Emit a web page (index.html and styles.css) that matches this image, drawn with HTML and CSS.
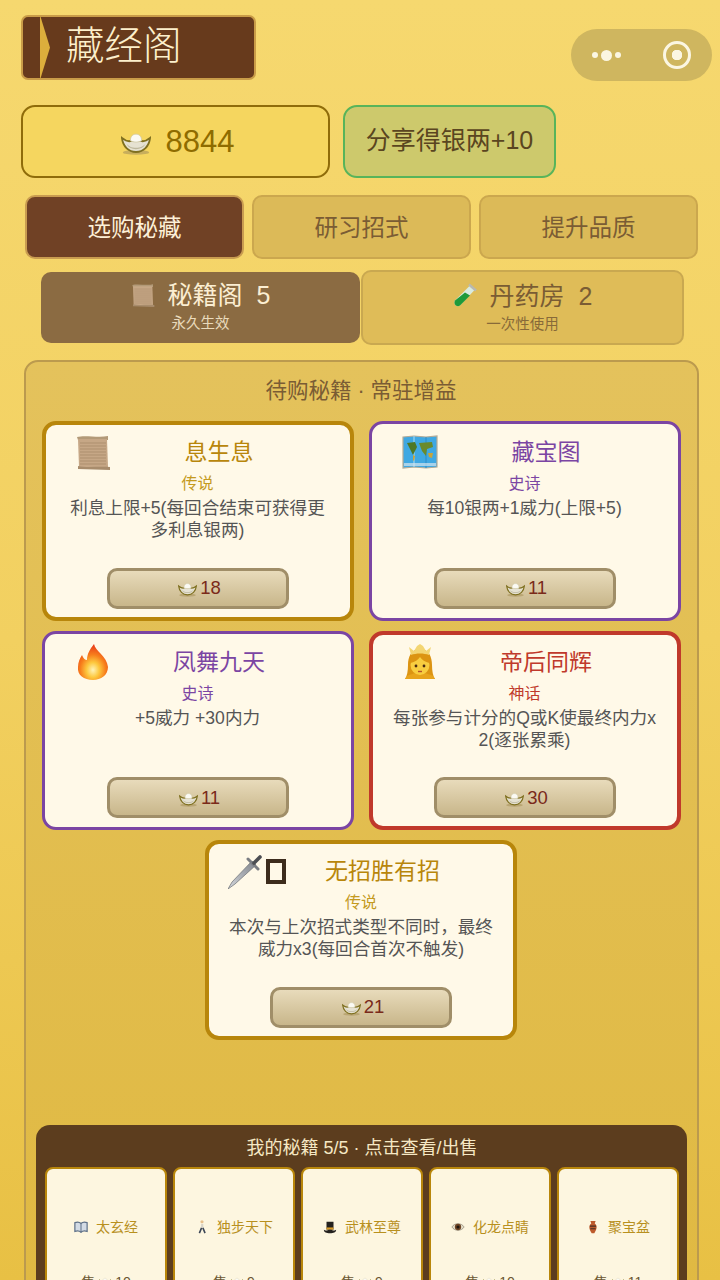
FILE: index.html
```html
<!DOCTYPE html>
<html lang="zh-CN">
<head>
  <meta charset="UTF-8">
  <meta name="viewport" content="width=device-width, initial-scale=1.0">
  <title>藏经阁</title>
  <link rel="stylesheet" href="styles.css">
</head>
<body>

<svg class="defs" width="0" height="0">
  <defs>
    <linearGradient id="blade" x1="0" y1="1" x2="1" y2="0">
      <stop offset="0" stop-color="#d5d8dc"/>
      <stop offset="1" stop-color="#7f848b"/>
    </linearGradient>
    <radialGradient id="flame" cx="0.5" cy="0.72" r="0.7">
      <stop offset="0" stop-color="#fff3b8"/>
      <stop offset="0.3" stop-color="#fdc83e"/>
      <stop offset="0.6" stop-color="#f77f1c"/>
      <stop offset="1" stop-color="#e8391a"/>
    </radialGradient>
  </defs>
  <symbol id="ingot" viewBox="0 0 32 24">
    <ellipse cx="16" cy="21.5" rx="14" ry="2.5" fill="#a8925a" opacity="0.6"/>
    <path d="M1 6 C6 10 9 10 11 9 L21 9 C23 10 26 10 31 6 C30 15 24 21 16 21 C8 21 2 15 1 6 Z" fill="#e6e2d2" stroke="#7f7020" stroke-width="2"/>
    <path d="M10 9 C10 4 13 2 16 2 C19 2 22 4 22 9 C19 11 13 11 10 9 Z" fill="#fbfaf4" stroke="#cfc8a6" stroke-width="0.8"/>
    <path d="M6 12 C9 18 23 18 26 12 C24 20 8 20 6 12 Z" fill="#bdb89e"/>
  </symbol>
  <symbol id="scroll" viewBox="0 0 36 36">
    <path d="M2 3 C10 1 24 4 33 2 L33 6 L3 6 Z" fill="#b39a78"/>
    <path d="M3 5 H32 L33 33 H4 Z" fill="#c6a786"/>
    <path d="M5 9H31M5 12H31M5 15H31M5 18H31M5 21H31M5 24H31M5 27H31M5 30H31" stroke="#ad8f6e" stroke-width="1"/>
    <path d="M3 32 C12 34 24 32 35 33 L35 36 L3 35 Z" fill="#a88c6c"/>
  </symbol>
  <symbol id="tube" viewBox="2 1 24 25">
    <path d="M19 3 L24 7 L9 23 C6 25 2 22 4 18 Z" fill="#d9ebe0"/>
    <path d="M14 10 L19 13 L9 23 C6 25 2 22 4 18 Z" fill="#1f9a3a"/>
    <path d="M18 2 L25 8" stroke="#b9b9b0" stroke-width="2.4"/>
  </symbol>
  <symbol id="map" viewBox="0 0 36 36">
    <path d="M1 3 L12 2 L24 3 L35 2 V33 L24 34 L12 33 L1 34 Z" fill="#3fa8e2" stroke="#b3ab97" stroke-width="1.2"/>
    <path d="M12 2V33" stroke="#8fcdee" stroke-width="1.4"/>
    <path d="M24 3V34" stroke="#2e8cc6" stroke-width="1"/>
    <path d="M5 9 L13 8 L15 13 L11 21 L8 15 Z" fill="#4e7826"/>
    <path d="M17 9 L30 8 L31 13 L25 15 L24 22 L20 17 Z" fill="#6a8a2c"/>
    <path d="M11 21 L13 22 L12 27 L11 26 Z" fill="#c8a43a"/>
    <path d="M26 19 L31 19 L30 24 L27 23 Z" fill="#c8a43a"/>
    <rect x="2" y="29" width="32" height="3" fill="#dfe8ee" opacity="0.65"/>
  </symbol>
  <symbol id="fire" viewBox="0 0 32 36">
    <path d="M17 0 C18 7 30 12 31 23 C31 31 24 36 16 36 C7 36 0 31 1 23 C1 18 3 14 5 11 C6 14 8 16 10 16 C10 10 13 5 17 0 Z" fill="url(#flame)"/>
  </symbol>
  <symbol id="queen" viewBox="0 0 32 36">
    <path d="M16 5 C7 5 4 13 4 21 C4 27 3 32 1 35 H31 C29 32 28 27 28 21 C28 13 25 5 16 5 Z" fill="#dc9412"/>
    <path d="M3 32 C7 30 9 30 11 29 H21 C23 30 25 30 29 32 L31 35 H1 Z" fill="#e8a41c"/>
    <ellipse cx="16" cy="21" rx="9.5" ry="10" fill="#f8cd40"/>
    <path d="M6.5 19 C11 18 14 16 16 13 C18 16 21 18 25.5 19 L25 11 H7 Z" fill="#dc9412"/>
    <path d="M7 11 L5 3 L10 7 L13 2 L16 0 L19 2 L22 7 L27 3 L25 11 C20 9 12 9 7 11 Z" fill="#f3d572"/>
    <circle cx="12" cy="22" r="1.4" fill="#4a2a10"/>
    <circle cx="20" cy="22" r="1.4" fill="#4a2a10"/>
    <path d="M14 27.5 H18" stroke="#b4502a" stroke-width="1.4"/>
  </symbol>
  <symbol id="dagger" viewBox="0 0 36 36">
    <path d="M24 8 L28 12 L7 31 L0 36 L4 29 Z" fill="url(#blade)" stroke="#6a6e74" stroke-width="0.7"/>
    <path d="M20 6 L30 16" stroke="#7a7d82" stroke-width="3" stroke-linecap="round"/>
    <path d="M26 10 L32 4" stroke="#4c4e52" stroke-width="3.6" stroke-linecap="round"/>
  </symbol>
  <symbol id="book" viewBox="0 0 16 14">
    <path d="M1 2 C4 1 6 1 8 3 C10 1 12 1 15 2 V12 C12 11 10 11 8 13 C6 11 4 11 1 12 Z" fill="#d3dbe5" stroke="#5f7189" stroke-width="1.4"/>
    <path d="M8 3V13" stroke="#5f7189" stroke-width="1.2"/>
  </symbol>
  <symbol id="walker" viewBox="0 0 10 16">
    <circle cx="5" cy="2" r="1.8" fill="#e8c08a"/>
    <path d="M4 4.5 L6.5 4.5 L6.5 9 L4 9 Z" fill="#d8d4c8"/>
    <path d="M4.5 9 L2 15 M6 9 L8.5 15" stroke="#3c4656" stroke-width="1.8"/>
  </symbol>
  <symbol id="hat" viewBox="0 0 16 14">
    <path d="M4 1 H12 V10 H4 Z" fill="#23211e"/>
    <rect x="4" y="7.5" width="8" height="2.5" fill="#d99a26"/>
    <path d="M1 10 C3 12 5 10 8 10 C11 10 13 12 15 10 C15 13 12 14 8 14 C4 14 1 13 1 10 Z" fill="#23211e"/>
  </symbol>
  <symbol id="eye" viewBox="0 0 16 12">
    <path d="M1 6 C4 1 12 1 15 6 C12 11 4 11 1 6 Z" fill="#e4ddc8" stroke="#8a8474" stroke-width="0.8"/>
    <circle cx="8" cy="6" r="3.6" fill="#6d4424"/>
    <circle cx="8" cy="6" r="1.8" fill="#1f1610"/>
  </symbol>
  <symbol id="jar" viewBox="0 0 10 16">
    <path d="M2 1 H8 L7 4 C10 6 10 10 6.5 15 H3.5 C0 10 0 6 3 4 Z" fill="#bd5a2c"/>
    <path d="M1.5 7 H8.5 M2 10 H8" stroke="#4a3024" stroke-width="1.4"/>
  </symbol>
</svg>

<div class="page">

  <!-- 顶部标题 + 小程序胶囊 -->
  <div class="top-bar">
    <div class="title-plate">
      <span class="title-notch"></span>
      <span class="title-text">藏经阁</span>
    </div>
    <div class="capsule">
      <div class="capsule-dots"><i></i><i class="big"></i><i></i></div>
      <div class="capsule-ring"></div>
    </div>
  </div>

  <!-- 银两 -->
  <div class="money-row">
    <div class="money-box">
      <svg class="money-icon"><use href="#ingot"/></svg>
      <span>8844</span>
    </div>
    <div class="share-btn">分享得银两+10</div>
  </div>

  <!-- 主标签 -->
  <div class="tabs">
    <div class="tab tab-active">选购秘藏</div>
    <div class="tab">研习招式</div>
    <div class="tab">提升品质</div>
  </div>

  <!-- 子标签 -->
  <div class="subtabs">
    <div class="subtab subtab-active">
      <div class="subtab-title"><svg class="subtab-icon"><use href="#scroll"/></svg>秘籍阁<span class="subtab-num">5</span></div>
      <div class="subtab-note">永久生效</div>
    </div>
    <div class="subtab">
      <div class="subtab-title"><svg class="subtab-icon"><use href="#tube"/></svg>丹药房<span class="subtab-num">2</span></div>
      <div class="subtab-note">一次性使用</div>
    </div>
  </div>

  <div class="panel">
    <div class="panel-title">待购秘籍 · 常驻增益</div>

    <div class="cards">
      <div class="card card-legend">
        <div class="card-head">
          <div class="card-icon"><svg class="icon-36"><use href="#scroll"/></svg></div>
          <div class="card-name">息生息</div>
        </div>
        <div class="card-rank">传说</div>
        <div class="card-desc">利息上限+5(每回合结束可获得更多利息银两)</div>
        <div class="buy-btn"><svg class="buy-icon"><use href="#ingot"/></svg>18</div>
      </div>

      <div class="card card-epic">
        <div class="card-head">
          <div class="card-icon"><svg class="icon-36"><use href="#map"/></svg></div>
          <div class="card-name">藏宝图</div>
        </div>
        <div class="card-rank">史诗</div>
        <div class="card-desc">每10银两+1威力(上限+5)</div>
        <div class="buy-btn"><svg class="buy-icon"><use href="#ingot"/></svg>11</div>
      </div>

      <div class="card card-epic">
        <div class="card-head">
          <div class="card-icon"><svg class="icon-36"><use href="#fire"/></svg></div>
          <div class="card-name">凤舞九天</div>
        </div>
        <div class="card-rank">史诗</div>
        <div class="card-desc">+5威力 +30内力</div>
        <div class="buy-btn"><svg class="buy-icon"><use href="#ingot"/></svg>11</div>
      </div>

      <div class="card card-myth">
        <div class="card-head">
          <div class="card-icon"><svg class="icon-36"><use href="#queen"/></svg></div>
          <div class="card-name">帝后同辉</div>
        </div>
        <div class="card-rank">神话</div>
        <div class="card-desc">每张参与计分的Q或K使最终内力x2(逐张累乘)</div>
        <div class="buy-btn"><svg class="buy-icon"><use href="#ingot"/></svg>30</div>
      </div>

      <div class="card card-legend">
        <div class="card-head">
          <div class="card-icon"><svg class="icon-36"><use href="#dagger"/></svg><span class="tofu"></span></div>
          <div class="card-name">无招胜有招</div>
        </div>
        <div class="card-rank">传说</div>
        <div class="card-desc">本次与上次招式类型不同时，最终威力x3(每回合首次不触发)</div>
        <div class="buy-btn"><svg class="buy-icon"><use href="#ingot"/></svg>21</div>
      </div>
    </div>

    <!-- 我的秘籍 -->
    <div class="owned">
      <div class="owned-title">我的秘籍 5/5 · 点击查看/出售</div>
      <div class="owned-list">
        <div class="owned-item">
          <div class="owned-name"><svg class="owned-icon"><use href="#book"/></svg>太玄经</div>
          <div class="owned-sell">售<svg class="sell-icon"><use href="#ingot"/></svg>10</div>
        </div>
        <div class="owned-item">
          <div class="owned-name"><svg class="owned-icon"><use href="#walker"/></svg>独步天下</div>
          <div class="owned-sell">售<svg class="sell-icon"><use href="#ingot"/></svg>9</div>
        </div>
        <div class="owned-item">
          <div class="owned-name"><svg class="owned-icon"><use href="#hat"/></svg>武林至尊</div>
          <div class="owned-sell">售<svg class="sell-icon"><use href="#ingot"/></svg>9</div>
        </div>
        <div class="owned-item">
          <div class="owned-name"><svg class="owned-icon"><use href="#eye"/></svg>化龙点睛</div>
          <div class="owned-sell">售<svg class="sell-icon"><use href="#ingot"/></svg>10</div>
        </div>
        <div class="owned-item">
          <div class="owned-name"><svg class="owned-icon"><use href="#jar"/></svg>聚宝盆</div>
          <div class="owned-sell">售<svg class="sell-icon"><use href="#ingot"/></svg>11</div>
        </div>
      </div>
    </div>
  </div>

</div>

</body>
</html>
```

FILE: styles.css
```css
/* 颜色 */
:root {
  --brown-dark: #673a1c;
  --brown-tab: #704125;
  --brown-text: #7a5c34;
  --gold: #b8860b;
  --purple: #7b45a3;
  --red: #c0392b;
  --paper: #fff9e8;
}

* {
  box-sizing: border-box;
}

html,
body {
  margin: 0;
  padding: 0;
  height: 1280px;
  overflow: hidden;
}

body {
  font-family: "Liberation Sans", "Noto Sans CJK SC", sans-serif;
  background: linear-gradient(180deg, #f6d86f 0%, #f2d060 50%, #e8c044 100%);
}

.defs {
  position: absolute;
}

.page {
  height: 1280px;
  padding: 15px 8px 0 21px;
  overflow: hidden;
}

/* 顶部 */
.top-bar {
  display: flex;
  justify-content: space-between;
  align-items: flex-start;
  height: 65px;
}

.title-plate {
  display: flex;
  align-items: center;
  width: 235px;
  height: 65px;
  padding-bottom: 2px;
  border: 2px solid #c99c48;
  border-radius: 7px;
  background: var(--brown-dark);
  overflow: hidden;
}

.title-notch {
  width: 10px;
  height: 65px;
  margin: 0 0 -2px 17px;
  background: #dcae3c;
  clip-path: polygon(0 0, 100% 50%, 0 100%);
}

.title-text {
  margin-left: 16px;
  font-size: 38.5px;
  font-weight: 300;
  line-height: 1;
  color: #fdf0cc;
}

.capsule {
  display: flex;
  justify-content: space-between;
  align-items: center;
  width: 141px;
  height: 52px;
  margin-top: 14px;
  padding: 0 21px;
  border-radius: 26px;
  background: #cfb65f;
}

.capsule-dots {
  display: flex;
  align-items: center;
  gap: 3px;
}

.capsule-dots i {
  width: 6px;
  height: 6px;
  border-radius: 50%;
  background: #fbf6e2;
}

.capsule-dots i.big {
  width: 11px;
  height: 11px;
}

.capsule-ring {
  width: 28px;
  height: 28px;
  border: 3px solid #fbf6e2;
  border-radius: 50%;
  background: radial-gradient(circle, #fbf6e2 0 5px, transparent 5.5px);
}

/* 银两 */
.money-row {
  display: flex;
  gap: 13px;
  margin-top: 25px;
}

.money-box,
.share-btn {
  display: flex;
  justify-content: center;
  align-items: center;
  height: 73px;
  border-radius: 14px;
}

.money-box {
  width: 309px;
  gap: 15px;
  padding-left: 4px;
  border: 2px solid #8f6c0a;
  background: #f5d65f;
  font-size: 31px;
  color: #8f6c00;
}

.money-icon {
  width: 30px;
  height: 23px;
  margin-top: 4px;
}

.share-btn {
  width: 213px;
  padding-bottom: 7px;
  border: 2px solid #58b45a;
  background: #cdc96c;
  font-size: 25px;
  color: #5a4520;
}

/* 主标签 */
.tabs {
  display: flex;
  gap: 8px;
  margin: 17px 0 0 4px;
}

.tab {
  display: flex;
  justify-content: center;
  align-items: center;
  width: 219px;
  height: 64px;
  padding-bottom: 2px;
  border: 2px solid #cba74e;
  border-radius: 10px;
  background: #dcba58;
  font-size: 23.5px;
  color: var(--brown-text);
}

.tab-active {
  border-color: #c99c50;
  background: var(--brown-tab);
  color: #fdf0d8;
}

/* 子标签 */
.subtabs {
  display: flex;
  align-items: center;
  margin: 11px 0 0 20px;
}

.subtab {
  display: flex;
  flex-direction: column;
  align-items: center;
  flex-shrink: 0;
  width: 323px;
  height: 75px;
  padding-top: 8px;
  border: 2px solid #c9a850;
  border-radius: 10px;
  background: #dfbc58;
  color: var(--brown-text);
}

.subtab-active {
  width: 319px;
  height: 71px;
  margin-right: 1px;
  padding-top: 7px;
  border: 0;
  background: #8b6b42;
  color: #fbeed2;
}

.subtab-title {
  display: flex;
  align-items: center;
  font-size: 25px;
  line-height: 32px;
}

.subtab-icon {
  width: 24px;
  height: 26px;
  margin-right: 13px;
}

.subtab-num {
  margin-left: 14px;
}

.subtab-note {
  margin-top: 1px;
  font-size: 14.5px;
  line-height: 22px;
  opacity: 0.85;
}

/* 大面板 */
.panel {
  width: 675px;
  height: 940px;
  margin: 15px 0 0 3px;
  padding: 13px 10px 0 15px;
  border: 2px solid #bb9a4e;
  border-radius: 14px;
  background: linear-gradient(180deg, #e4c25c 0%, #e0b942 100%);
}

.panel-title {
  padding: 1px 6px 0 0;
  text-align: center;
  font-size: 21.5px;
  line-height: 30px;
  color: var(--brown-text);
}

.cards {
  display: flex;
  flex-wrap: wrap;
  justify-content: center;
  align-content: flex-start;
  gap: 10px 15px;
  width: 640px;
  height: 704px;
  margin-top: 15px;
}

.card {
  display: flex;
  flex-direction: column;
  align-items: center;
  width: 312px;
  height: 199.5px;
  padding: 9px 16px 8px;
  border: 4px solid var(--gold);
  border-radius: 14px;
  background: var(--paper);
}

.card-epic {
  padding: 10px 17px 9px;
  border-width: 3px;
  border-color: var(--purple);
}

.card-myth {
  border-color: var(--red);
}

.card-head {
  display: flex;
  align-items: center;
  align-self: stretch;
  height: 36px;
  margin: 0 10px;
}

.card-icon {
  display: flex;
  justify-content: center;
  align-items: center;
  gap: 2px;
  flex-shrink: 0;
  width: 43px;
}

.icon-36 {
  flex-shrink: 0;
  width: 36px;
  height: 36px;
}

.tofu {
  flex-shrink: 0;
  width: 20px;
  height: 25px;
  border: 4px solid #3d2c1c;
}

.card-name {
  flex: 1;
  text-align: center;
  font-size: 23px;
  line-height: 36px;
  color: var(--gold);
}

.card-epic .card-name,
.card-epic .card-rank {
  color: var(--purple);
}

.card-myth .card-name,
.card-myth .card-rank {
  color: var(--red);
}

.card-rank {
  margin-top: 3px;
  font-size: 16px;
  line-height: 22px;
  color: #c49a1e;
}

.card-desc {
  flex: 1;
  width: 268px;
  margin-top: 2px;
  text-align: center;
  font-size: 17.6px;
  line-height: 22px;
  word-break: break-all;
  color: #555;
}

.buy-btn {
  display: flex;
  justify-content: center;
  align-items: center;
  flex-shrink: 0;
  width: 182px;
  height: 41px;
  padding-left: 4px;
  border: 3px solid #a08e68;
  border-radius: 10px;
  background: linear-gradient(180deg, #e8dbbb 0%, #c8b68a 100%);
  font-size: 18.5px;
  color: #7a2a1a;
}

.buy-icon {
  width: 19px;
  height: 15px;
  margin: 3px 3px 0 0;
}

/* 我的秘籍 */
.owned {
  width: 651px;
  height: 200px;
  margin-left: -5px;
  padding: 10px 8px 0 9px;
  border-radius: 14px 14px 0 0;
  background: #5c3d1e;
}

.owned-title {
  text-align: center;
  font-size: 18px;
  line-height: 26px;
  color: #f6e8c4;
}

.owned-list {
  display: flex;
  gap: 6px;
  margin-top: 6px;
}

.owned-item {
  display: flex;
  flex-direction: column;
  align-items: center;
  width: 122px;
  height: 140px;
  padding-top: 48px;
  border: 2px solid #b8860b;
  border-radius: 8px;
  background: #fdf6e0;
}

.owned-name {
  display: flex;
  align-items: center;
  gap: 8px;
  font-size: 14px;
  line-height: 20px;
  color: #b8901e;
}

.owned-icon {
  width: 14px;
  height: 14px;
}

.owned-sell {
  display: flex;
  align-items: center;
  margin-top: 35px;
  font-size: 14px;
  line-height: 20px;
  color: #6b5632;
}

.sell-icon {
  width: 12px;
  height: 10px;
  margin: 0 4px;
}
```
